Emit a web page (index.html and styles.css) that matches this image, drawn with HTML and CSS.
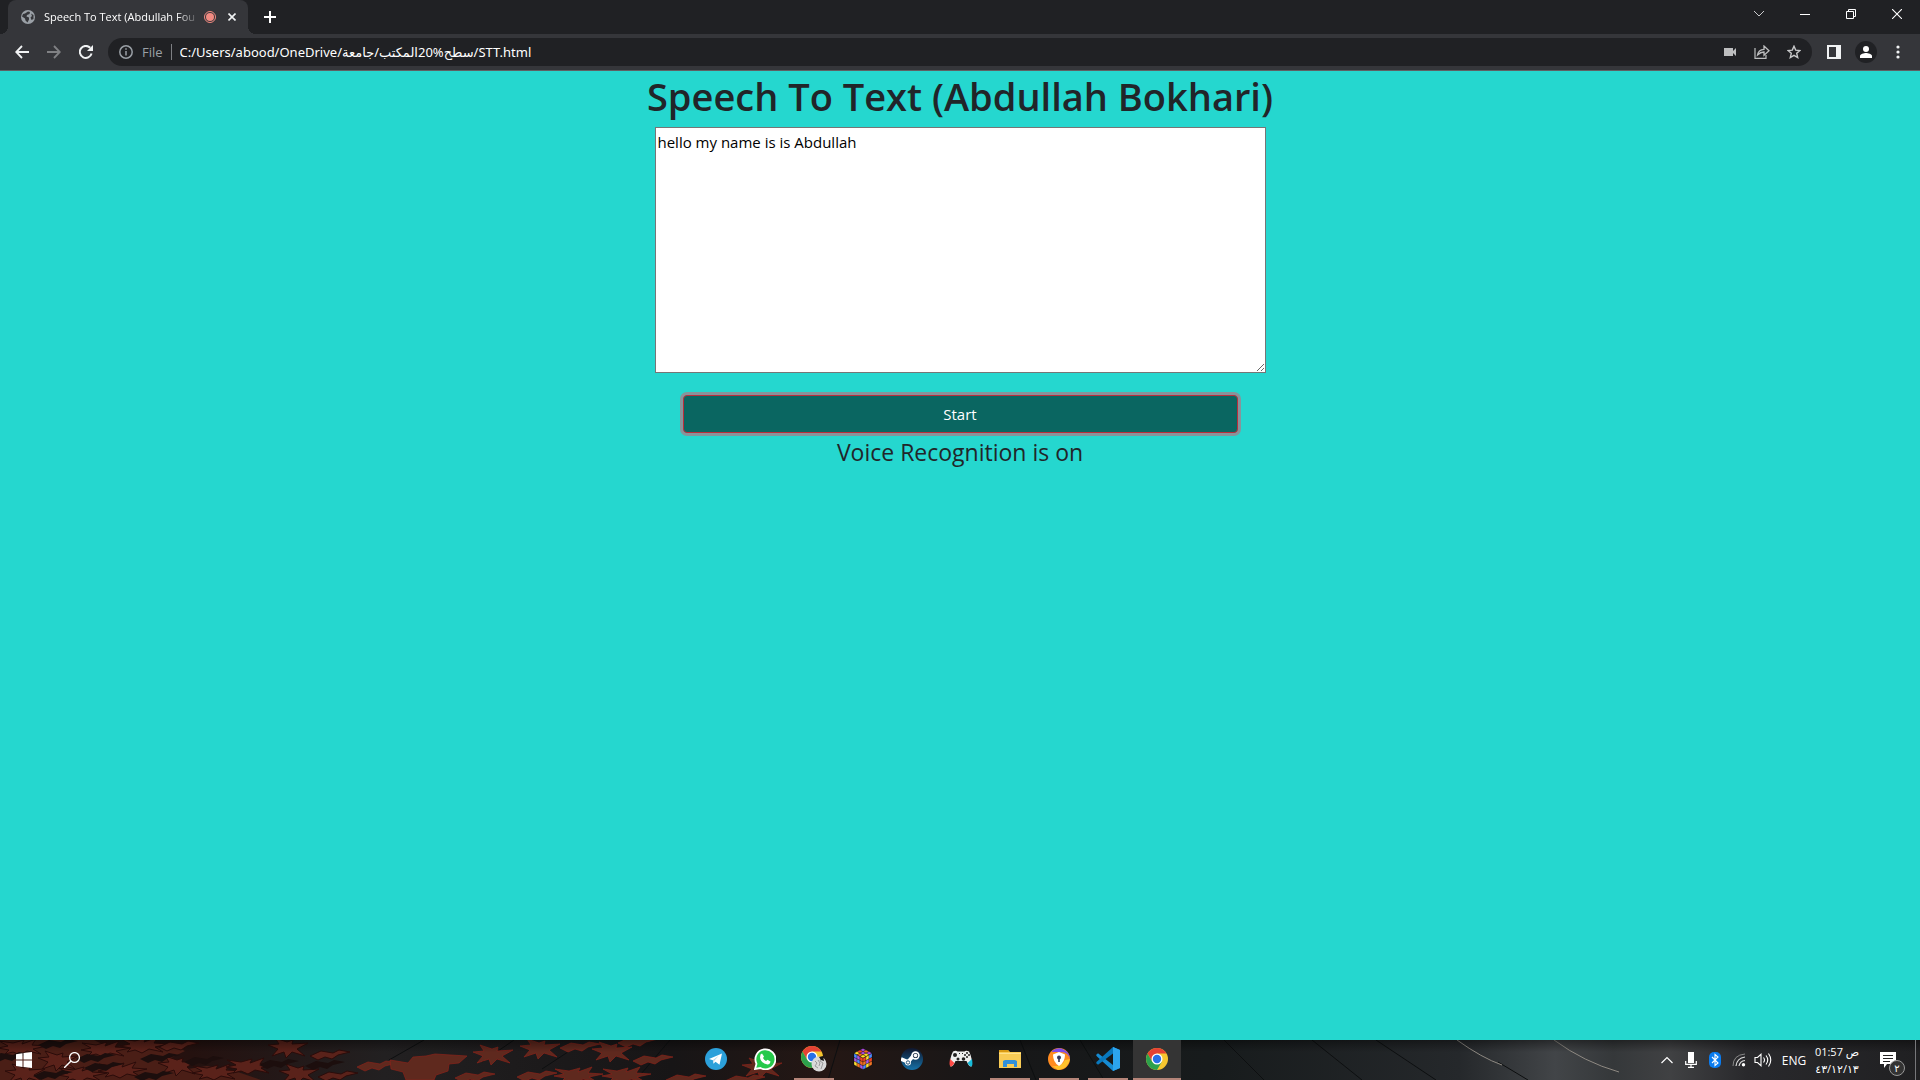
FILE: index.html
```html
<!DOCTYPE html>
<html lang="en">
<head>
<meta charset="utf-8">
<title>Speech To Text</title>
<link rel="stylesheet" href="styles.css">
</head>
<body>
<header class="chrome">
  <div class="tabstrip">
    <div class="tab">
      <svg width="14" height="14" viewBox="0 0 14 14"><circle cx="7" cy="7" r="7" fill="#9aa0a6"/><path d="M7 1.500 9 2 8.500 4 6 5 5.500 6.500 8 7.500 8 9.500 6.500 12.500 4.500 10.500 4 8.500 1 6.500 2 4 4 3.500z" fill="#35363a"/><path d="M10 3.500 12.500 5 12.500 9 10.500 10 9.500 7.500 11 6z" fill="#35363a"/></svg>
      <span class="tab-title">Speech To Text (Abdullah Fou</span>
      <svg width="12" height="12" viewBox="0 0 12 12"><circle cx="6" cy="6" r="4" fill="#f28b82"/><circle cx="6" cy="6" r="5.500" fill="none" stroke="#f28b82"/></svg>
      <button class="tab-close" aria-label="Close tab"><svg width="8" height="8" viewBox="0 0 8 8"><path d="M.5.5l7 7m0-7l-7 7" stroke="#f1f3f4" stroke-width="1.600"/></svg></button>
    </div>
    <button class="new-tab" aria-label="New tab"><svg width="12" height="12" viewBox="0 0 12 12"><path d="M6 0v12M0 6h12" stroke="#fff" stroke-width="2"/></svg></button>
    <div class="window-buttons">
      <button aria-label="Search tabs"><svg width="12" height="12" viewBox="0 0 12 12"><path d="M1 3l5 5 5-5" fill="none" stroke="#c9cacc"/></svg></button>
      <button aria-label="Minimize"><svg width="10" height="10" viewBox="0 0 10 10"><path d="M0 5.500h10" stroke="#fff"/></svg></button>
      <button aria-label="Restore"><svg width="10" height="10" viewBox="0 0 10 10"><path d="M.5 2.500h7v7h-7zM2.500 2.500v-2h7v7h-2" fill="none" stroke="#fff"/></svg></button>
      <button aria-label="Close window"><svg width="10" height="10" viewBox="0 0 10 10"><path d="M0 0l10 10M10 0L0 10" stroke="#fff" stroke-width="1.100"/></svg></button>
    </div>
  </div>
  <div class="toolbar">
    <button class="tool" aria-label="Back"><svg width="14" height="14" viewBox="0 0 14 14"><path d="M14 7H1.500M7 1L1.200 7 7 13" fill="none" stroke="#f1f3f4" stroke-width="1.800"/></svg></button>
    <button class="tool" aria-label="Forward"><svg width="14" height="14" viewBox="0 0 14 14"><path d="M0 7h12.500M7 1l5.800 6L7 13" fill="none" stroke="#808184" stroke-width="1.800"/></svg></button>
    <button class="tool" aria-label="Reload"><svg width="14" height="14" viewBox="0 0 14 14"><path d="M12.600 8.500A6 6 0 1 1 11.200 2.800" fill="none" stroke="#f1f3f4" stroke-width="2"/><path d="M14 0v6H8z" fill="#f1f3f4"/></svg></button>
    <div class="omnibox">
      <svg width="14" height="14" viewBox="0 0 14 14"><circle cx="7" cy="7" r="6.200" fill="none" stroke="#9aa0a6" stroke-width="1.500"/><path d="M7 6v4.500M7 3.300v1.500" stroke="#9aa0a6" stroke-width="1.500"/></svg>
      <span class="scheme">File</span>
      <input class="address" type="text" aria-label="Address" value="C:/Users/abood/OneDrive/سطح%20المكتب/جامعة/STT.html">
      <button class="omni-button" aria-label="Camera and microphone"><svg width="14" height="14" viewBox="0 0 14 14"><path d="M1 3h9v3l3-3v8l-3-3v3H1z" fill="#bdbebf"/></svg></button>
      <button class="omni-button" aria-label="Share"><svg width="16" height="14" viewBox="0 0 16 14"><path d="M1 3v10.300h11V10" fill="none" stroke="#bdbebf" stroke-width="1.200"/><path d="M3.500 10C4 6.500 6.500 4.500 10 4.300V1l5 4.700-5 4.500V7C7.500 7 5.500 8 3.500 10z" fill="none" stroke="#bdbebf" stroke-width="1.300"/></svg></button>
      <button class="omni-button" aria-label="Bookmark"><svg width="14" height="14" viewBox="0 0 14 14"><path d="M7 1.200l1.700 3.900 4.200.4-3.200 2.800 1 4.200L7 10.300l-3.700 2.200 1-4.200L1.100 5.500l4.200-.4z" fill="none" stroke="#c8c9ca" stroke-width="1.400"/></svg></button>
    </div>
    <button class="tool" aria-label="Side panel"><svg width="14" height="14" viewBox="0 0 14 14"><path fill-rule="evenodd" d="M0 0h14v14H0zM2 2v10h7V2z" fill="#f1f3f4"/></svg></button>
    <button class="tool" aria-label="Profile"><svg width="22" height="22" viewBox="0 0 22 22"><circle cx="11" cy="11" r="11" fill="#202124"/><circle cx="11" cy="8" r="3" fill="#fff"/><path d="M5 17v-2c0-2 4-3 6-3s6 1 6 3v2z" fill="#fff"/></svg></button>
    <button class="tool" aria-label="Menu"><svg width="4" height="14" viewBox="0 0 4 14"><g fill="#f1f3f4"><circle cx="2" cy="2" r="1.600"/><circle cx="2" cy="7" r="1.600"/><circle cx="2" cy="12" r="1.600"/></g></svg></button>
  </div>
</header>

<main class="page">
  <h1 class="heading">Speech To Text (Abdullah Bokhari)</h1>
  <textarea class="transcript" aria-label="Transcript" spellcheck="false">hello my name is is Abdullah</textarea>
  <button class="start">Start</button>
  <p class="status">Voice Recognition is on</p>
</main>

<footer class="taskbar">
  <svg class="wallpaper" viewBox="0 0 1920 40" preserveAspectRatio="xMinYMin slice" aria-hidden="true">
    <defs>
      <linearGradient id="slate"><stop offset="0" stop-color="#30100c"/><stop offset=".1" stop-color="#24110f"/><stop offset=".2" stop-color="#222021"/><stop offset=".35" stop-color="#171516"/><stop offset=".43" stop-color="#241714"/><stop offset=".52" stop-color="#171718"/><stop offset=".63" stop-color="#171b1c"/><stop offset=".76" stop-color="#25282b"/><stop offset=".81" stop-color="#424548"/><stop offset=".84" stop-color="#35383a"/><stop offset=".87" stop-color="#404143"/><stop offset=".91" stop-color="#29292c"/><stop offset="1" stop-color="#202022"/></linearGradient>
      <linearGradient id="shade" x2="0" y2="1"><stop offset="0" stop-color="#000" stop-opacity=".4"/><stop offset=".3" stop-color="#000" stop-opacity="0"/></linearGradient>
      <path id="leaf" d="M-20-3L-9-4-13-10-1-6 5-8 4-4 20-5 9 1 17 8 4 4-2 10-4 4-16 8-10 1z"/>
      <path id="maple" d="M-23-7L-9-5 2-8 0-4 14-9 10-3 25-2 11 1 19 6 5 3-2 7-9 4-17 6-13 2-24 0-14-2z"/>
      <path id="scrap" d="M-20 1L-9-4 3-2 9-5 20-3 8 0 2 4-5 2-12 5z"/>
    </defs>
    <path fill="url(#slate)" d="M0 0h1920v40H0z"/>
    <path fill="#4a1e16" d="M0 0h94l16 8 23-3 10 5 30-5 12 6-14 7 10 12 26-4 28 5 26 9H0z"/>
    <g fill="#5a221a" stroke="#2a0c0a">
      <use href="#maple" x="22" y="8"/><use href="#leaf" x="58" y="21"/><use href="#maple" x="105" y="10"/><use href="#maple" x="144" y="6"/><use href="#leaf" x="178" y="26"/><use href="#maple" x="122" y="31"/><use href="#maple" x="82" y="35"/><use href="#leaf" x="25" y="34"/><use href="#maple" x="216" y="33"/><use href="#maple" x="250" y="27"/><use href="#leaf" x="288" y="8"/><use href="#scrap" x="330" y="15"/><use href="#leaf" x="299" y="34"/><use href="#scrap" x="338" y="36"/><use href="#scrap" x="179" y="6"/>
    </g>
    <g fill="#1c0e0d">
      <use href="#scrap" x="10" y="17"/><use href="#scrap" x="58" y="4"/><use href="#scrap" x="96" y="18"/><use href="#scrap" x="53" y="35"/><use href="#scrap" x="104" y="27"/><use href="#scrap" x="160" y="18"/><use href="#scrap" x="154" y="36"/><use href="#scrap" x="204" y="21"/><use href="#scrap" x="279" y="24"/><use href="#scrap" x="325" y="25"/>
    </g>
    <path d="M424 0l-35 20M514 0l-32 22M574 8l-32 21M670 0l-29 34M840 0l-12 40M1020 0l16 40M1080 0l24 40M1224 0l40 40M1312 0l50 40M1376 0l60 40M1498 22l30 18" stroke="#0d0f10" fill="none"/>
    <path d="M1457 0q25 18 45 25M1554 0q30 22 65 32" stroke="#8e8982" fill="none"/>
    <g fill="#5f291e" stroke="#8a221a" stroke-width=".7">
      <use href="#scrap" x="377" y="26"/><path d="M390 20l18 3 5-6 13-1 9-2 32 2-8 7-10 1-1 7-12 4-2 5h-28l-3-8-12-3z"/><use href="#leaf" x="493" y="15"/><use href="#leaf" x="540" y="9"/><use href="#scrap" x="580" y="7"/><use href="#leaf" x="612" y="12"/><use href="#scrap" x="653" y="20"/><use href="#scrap" x="537" y="36"/><use href="#maple" x="578" y="36"/><use href="#maple" x="626" y="36"/><use href="#scrap" x="475" y="37"/><use href="#scrap" x="638" y="2"/><use href="#scrap" x="686" y="39"/><use href="#leaf" x="762" y="28"/><use href="#scrap" x="745" y="40"/>
    </g>
    <path fill="url(#shade)" d="M0 0h1920v40H0z"/>
  </svg>
  <button class="system" aria-label="Start menu"><svg width="16" height="16" viewBox="0 0 16 16"><path d="M0 2.200l6.500-1v6.300H0zM7.500 1L16 0v7.500H7.500zM0 8.500h6.500v6.400L0 14zM7.500 8.500H16V16l-8.500-1.100z" fill="#fff"/></svg></button>
  <button class="system" aria-label="Search"><svg width="16" height="16" viewBox="0 0 16 16"><circle cx="10.500" cy="5.500" r="4.900" fill="none" stroke="#fff" stroke-width="1.300"/><path d="M7 9L0 16" stroke="#fff" stroke-width="1.400"/></svg></button>
  <nav class="apps" aria-label="Pinned apps">
    <button class="app" aria-label="Telegram"><svg width="22" height="22" viewBox="0 0 22 22"><circle cx="11" cy="11" r="11" fill="#2ca0da"/><path d="M4 11L17 5.500l-2.500 11.200-4-3-2 2-.6-3.500z" fill="#fff"/><path d="M8 12l6-4.500-4.500 5-.8 2.500z" fill="#b9d8ea"/></svg></button>
    <button class="app" aria-label="WhatsApp"><svg width="22" height="22" viewBox="0 0 22 22"><path d="M1 21l1.500-5.200A10 10 0 1 1 6.500 20z" fill="#25c94a" stroke="#fff" stroke-width="1.800"/><path d="M6.500 6.500l1.500-1 2 3-1 1.500q1 2 3 3l1.500-1.200 3 1.700q-.5 3-3 3Q7 15.500 6 9.500z" fill="#fff"/></svg></button>
    <button class="app open" aria-label="Chrome profile"><svg width="26" height="26" viewBox="0 0 26 26"><use href="#chrome"/><circle cx="18" cy="18" r="7.500" fill="#d9d9d9"/><path d="M14 15l2 2-2 3 3 2M21 11l-2 4 3 2-2 6M17 14l2 3-1 3" fill="none" stroke="#999"/><path d="M18 11l4-1 1 5-3-1z" fill="#151515"/></svg></button>
    <button class="app" aria-label="Cube"><svg width="20" height="22" viewBox="0 0 20 22"><path d="M10 0l9.500 5v12L10 22 .5 17V5z" fill="#111"/>
      <g stroke="#111" stroke-width=".3">
        <path d="M10 .5l3 1.500-3 1.600L7 2z" fill="#b14ae0"/><path d="M7 2l3 1.600-3 1.600-3-1.600z" fill="#f3452b"/><path d="M13 2l3 1.600-3 1.600-3-1.600z" fill="#f36b21"/><path d="M4 3.600l3 1.600-3 1.600-3-1.600z" fill="#ffdf22"/><path d="M10 3.600l3 1.600-3 1.600-3-1.600z" fill="#b14ae0"/><path d="M16 3.600l3 1.600-3 1.600-3-1.600z" fill="#b14ae0"/><path d="M7 5.200l3 1.600-3 1.600-3-1.600z" fill="#f36b21"/><path d="M13 5.200l3 1.600-3 1.600-3-1.600z" fill="#ffdf22"/><path d="M10 6.800l3 1.600-3 1.600-3-1.600z" fill="#ffdf22"/>
        <path d="M1 5.500l3 1.600v3.800L1 9.400z" fill="#4c8cff"/><path d="M4 7.100l3 1.600v3.800l-3-1.600z" fill="#a958e5"/><path d="M7 8.700l3 1.600v3.800l-3-1.600z" fill="#f04424"/><path d="M1 9.400l3 1.500v3.900l-3-1.600z" fill="#a958e5"/><path d="M4 10.900l3 1.600v3.800l-3-1.500z" fill="#4c8cff"/><path d="M7 12.500l3 1.600V18l-3-1.700z" fill="#f36b21"/><path d="M1 13.200l3 1.600v3.700l-3-1.700z" fill="#ffe034"/><path d="M4 14.800l3 1.500v3.800l-3-1.600z" fill="#f27624"/><path d="M7 16.300l3 1.700v3.600l-3-1.500z" fill="#a958e5"/>
        <path d="M10 10.300l3-1.600v3.800l-3 1.600z" fill="#f04424"/><path d="M13 8.700l3-1.600v3.800l-3 1.600z" fill="#ffe034"/><path d="M16 7.100l3-1.600v3.900l-3 1.500z" fill="#4c8cff"/><path d="M10 14.100l3-1.600v3.800L10 18z" fill="#f27624"/><path d="M13 12.500l3-1.600v3.900l-3 1.500z" fill="#a958e5"/><path d="M16 10.900l3-1.500v3.800l-3 1.600z" fill="#f04424"/><path d="M10 18l3-1.700v3.800l-3 1.500z" fill="#4c8cff"/><path d="M13 16.300l3-1.500v3.700l-3 1.600z" fill="#ffe034"/><path d="M16 14.800l3-1.600v3.600l-3 1.700z" fill="#f27624"/>
      </g></svg></button>
    <button class="app" aria-label="Steam"><svg width="22" height="22" viewBox="0 0 22 22"><defs><linearGradient id="steam" x2="0" y2="1"><stop stop-color="#10162c"/><stop offset="1" stop-color="#1672a8"/></linearGradient></defs><circle cx="11" cy="11" r="11" fill="url(#steam)"/><path d="M0 11l7 3 6-7" fill="none" stroke="#fff" stroke-width="3.600"/><circle cx="14.500" cy="7.500" r="4.200" fill="#fff"/><circle cx="14.500" cy="7.500" r="2.600" fill="#26364c"/><circle cx="14.500" cy="7.500" r="1.800" fill="#fff"/><circle cx="7" cy="14.500" r="3" fill="#fff"/><circle cx="7" cy="14.500" r="1.700" fill="none" stroke="#25577c"/></svg></button>
    <button class="app" aria-label="Game controller"><svg width="24" height="18" viewBox="0 0 24 18"><path d="M4 1.500Q7 0 8.500 1.500h7Q17 0 20 1.500 24 9 22.500 16.500 20 17 17.500 11h-11Q4 17 1.500 16.500 0 9 4 1.500z" fill="#eee"/><path d="M1 9l4.500 4Q3 17 1.300 16.300 0 15 1 9z" fill="#ff4b46"/><path d="M23 9l-4.500 4q2.500 4 4.200 3.300Q24 15 23 9z" fill="#17bcda"/><g fill="#222"><circle cx="6" cy="5" r="2"/><circle cx="14.500" cy="9" r="1.800"/><circle cx="9" cy="9" r="1.500"/><circle cx="18" cy="3" r="1"/><circle cx="18" cy="7" r="1"/><circle cx="16" cy="5" r="1"/><circle cx="20" cy="5" r="1"/><path d="M10 3h1v1h-1zM13 3h1v1h-1z"/></g></svg></button>
    <button class="app open" aria-label="File Explorer"><svg width="22" height="20" viewBox="0 0 22 20"><path d="M0 1h9l2 2h11v16H0z" fill="#f8cb55"/><path d="M0 1h9l1 2H0z" fill="#d99a13"/><path d="M4 18v-6l2-1h10l2 1v6h-3v-3H8v3z" fill="#3190da"/><path d="M0 4h22v1H0z" fill="#ffe28a"/></svg></button>
    <button class="app open" aria-label="Secure Browser"><svg width="24" height="24" viewBox="0 0 24 24"><circle cx="12" cy="12" r="11" fill="#ff8b20"/><path d="M5 4A11 11 0 0 1 23 13Q22 5 14 5H5z" fill="#7d4be8"/><path d="M23 12Q21 22 11 23L5 19q10 1 13-6z" fill="#ffc22b"/><path d="M12 5l6 2.500q0 8-6 11.500-6-3.500-6-11.500z" fill="#fff"/><circle cx="12" cy="10.500" r="2" fill="#343659"/><path d="M11.200 11h1.600v4h-1.600z" fill="#343659"/></svg></button>
    <button class="app open" aria-label="Visual Studio Code"><svg width="24" height="24" viewBox="0 0 24 24"><path d="M17 0l7 3v18l-7 3L1 9.500 0 8l2-1.800L17 18z" fill="#168bd2"/><path d="M17 0L1 14.500 0 16l2 1.800L17 6.500z" fill="#0878bd"/><path d="M17 0l7 3v18l-7 3z" fill="#2ca4ee"/></svg></button>
    <button class="app open active" aria-label="Google Chrome"><svg width="22" height="22" viewBox="0 0 22 22"><g id="chrome"><circle cx="11" cy="11" r="11" fill="#f7c62f"/><path d="M1.500 5.500A11 11 0 0 1 20.500 5.500H11l-5 8z" fill="#e44234"/><path d="M1.500 5.500A11 11 0 0 0 11 22l4.800-8.300H6.200z" fill="#2ca14c"/><circle cx="11" cy="11" r="5.500" fill="#fff"/><circle cx="11" cy="11" r="4.200" fill="#2870e8"/></g></svg></button>
  </nav>
  <div class="tray">
    <button aria-label="Hidden icons"><svg width="12" height="8" viewBox="0 0 12 8"><path d="M.5 7L6 1.500 11.500 7" fill="none" stroke="#fff" stroke-width="1.200"/></svg></button>
    <button aria-label="Microphone"><svg width="12" height="16" viewBox="0 0 12 16"><path d="M3 0h6v11H3z" fill="#fff"/><path d="M.7 9v3.300h10.600V9M6 12v3.300M3 15.400h6" fill="none" stroke="#fff" stroke-width="1.200"/></svg></button>
    <button aria-label="Bluetooth"><svg width="12" height="16" viewBox="0 0 12 16"><rect width="12" height="16" rx="5" fill="#0a7cf0"/><path d="M3 5l6 6-3 2.500v-11L9 5l-6 6" fill="none" stroke="#fff" stroke-width="1.100"/></svg></button>
    <button aria-label="Wi-Fi"><svg width="14" height="14" viewBox="0 0 14 14"><path d="M1 13Q1 2 13 1" stroke="#888" fill="none"/><path d="M4 13Q5 5 13 4M7 13Q8 8 13 7.500" stroke="#ddd" fill="none" stroke-width="1.200"/><circle cx="11.500" cy="11.800" r="1.700" fill="#fff"/></svg></button>
    <button aria-label="Volume"><svg width="18" height="14" viewBox="0 0 18 14"><path d="M1 4.500h2.500L7 1.300v11.400L3.500 9.500H1zM9.500 4.500q2 2.500 0 5M12 2.500q3.500 4.500 0 9M14.500.5q4.500 6.500 0 13" fill="none" stroke="#fff" stroke-width="1.100"/></svg></button>
    <button class="language">ENG</button>
    <button class="clock"><span dir="ltr">01:57 ص</span><span>٤٣/١٢/١٣</span></button>
    <button class="notice" aria-label="Notifications"><svg width="16" height="16" viewBox="0 0 16 16"><path d="M0 0h16v12H7l-3 4v-4H0z" fill="#fff"/><path d="M3 3.500h10M3 6.500h10M3 9.500h7" stroke="#222"/></svg><span class="count">٢</span></button>
    <button class="desktop" aria-label="Show desktop"></button>
  </div>
</footer>
</body>
</html>
```
FILE: styles.css
```css
* { box-sizing: border-box; }
body {
  margin: 0;
  min-height: 100vh;
  display: flex;
  flex-direction: column;
  background: #25d7cf;
  color: #212529;
  font-family: "Open Sans", "DejaVu Sans", sans-serif;
}
button {
  padding: 0;
  border: 0;
  background: none;
  color: #fff;
  font: inherit;
}
svg { display: block; flex: none; }

.chrome { background: #35363a; border-bottom: 1px solid #5f6063; }
.tabstrip { display: flex; height: 34px; padding-left: 8px; background: #202124; }
.tab {
  position: relative;
  display: flex;
  align-items: center;
  width: 240px;
  padding: 0 12px 0 13px;
  border-radius: 8px 8px 0 0;
  background: #35363a;
}
.tab::before, .tab::after {
  content: "";
  position: absolute;
  bottom: 0;
  width: 8px;
  height: 8px;
}
.tab::before { left: -8px; background: radial-gradient(circle at 0 0, #202124 8px, #35363a 8px); }
.tab::after { right: -8px; background: radial-gradient(circle at 100% 0, #202124 8px, #35363a 8px); }
.tab-title {
  flex: 1;
  margin: 0 4px 0 9px;
  padding-bottom: 2px;
  white-space: nowrap;
  color: #fff;
  font-size: 11px;
  -webkit-mask-image: linear-gradient(90deg, #000 85%, transparent);
  mask-image: linear-gradient(90deg, #000 85%, transparent);
}
.tab-close { margin-left: 12px; }
.new-tab { width: 44px; display: grid; place-items: center; }
.window-buttons { display: flex; margin-left: auto; height: 28px; }
.window-buttons button { width: 46px; display: grid; place-items: center; }

.toolbar { display: flex; align-items: center; height: 36px; padding: 0 6px; }
.tool { width: 32px; height: 28px; display: grid; place-items: center; }
.omnibox {
  flex: 1;
  display: flex;
  align-items: center;
  height: 28px;
  margin: 0 6px;
  padding: 0 2px 0 11px;
  border-radius: 14px;
  background: #202124;
}
.scheme {
  margin-left: 9px;
  padding-right: 8px;
  border-right: 1px solid #7d7f83;
  color: #9aa0a6;
  font-size: 13px;
  line-height: 16px;
}
.address {
  flex: 1;
  min-width: 0;
  padding: 0 0 0 8px;
  border: 0;
  outline: 0;
  background: none;
  color: #fff;
  font: 13px "Noto Sans", "DejaVu Sans", sans-serif;
}
.omni-button { width: 32px; display: grid; place-items: center; }

.page { flex: 1; display: flex; flex-direction: column; align-items: center; }
.heading { margin: 1px 0 7px; font-size: 38px; font-weight: 600; line-height: 48px; }
.transcript {
  width: 611px;
  max-width: 100%;
  height: 246px;
  padding: 2px;
  border: 1px solid #767676;
  border-radius: 0;
  outline: 0;
  color: #000;
  font: 15px/24px "Open Sans", sans-serif;
}
.start {
  width: 555px;
  max-width: 100%;
  height: 38px;
  margin-top: 22px;
  border: 1px solid #bb2d3b;
  border-radius: 4px;
  background: #0a6661;
  box-shadow: 0 0 0 3px #87949b;
  font-size: 15px;
  line-height: 24px;
}
.status { margin: 3px 0 0; font-size: 23px; line-height: 32px; }

.taskbar {
  position: relative;
  display: grid;
  grid-template-columns: 48px 48px 1fr auto;
  height: 40px;
  overflow: hidden;
  background: #1d1d1f;
  color: #fff;
}
.wallpaper { position: absolute; inset: 0; width: 100%; height: 100%; }
.system, .apps, .tray { position: relative; }
.system { display: grid; place-items: center; }
.apps { display: flex; justify-content: center; gap: 1px; padding-left: 122px; }
.app { width: 48px; display: grid; place-items: center; border-bottom: 2px solid transparent; }
.app.open { background: linear-gradient(#b58579, #b58579) center bottom / 40px 2px no-repeat border-box; }
.app.active { border-color: #b58579; background: #343434; }
.tray { display: flex; align-items: center; }
.tray > button { height: 40px; width: 24px; display: grid; place-items: center; }
.tray .language { width: 38px; font-size: 12px; }
.tray .clock {
  width: 48px;
  align-content: center;
  font-size: 11px;
  line-height: 17px;
}
.tray .notice { position: relative; width: 54px; }
.count {
  position: absolute;
  left: 28px;
  top: 20px;
  width: 16px;
  height: 16px;
  border: 1px solid #999;
  border-radius: 8px;
  background: #333;
  font-size: 10px;
  line-height: 14px;
}
.tray .desktop { width: 5px; border-left: 1px solid #77777a; }
```
